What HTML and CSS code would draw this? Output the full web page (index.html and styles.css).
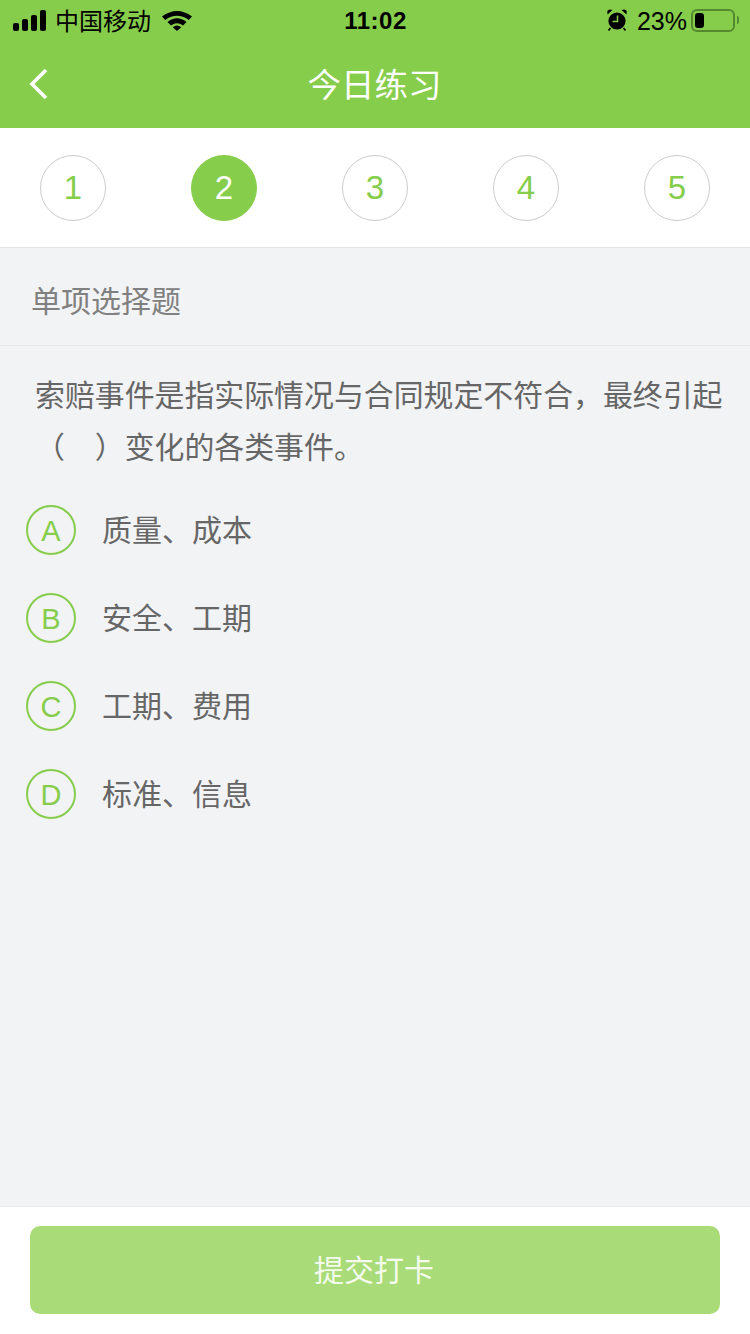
FILE: index.html
```html
<!DOCTYPE html>
<html lang="zh-CN">
<head>
  <meta charset="UTF-8">
  <title>今日练习</title>
  <link rel="stylesheet" href="styles.css">
</head>
<body>

<div class="page">
  <header class="top">
    <div class="status">
      <div class="status-left">
        <span class="signal"><i></i><i></i><i></i><i></i></span>
        <span class="carrier">中国移动</span>
        <svg class="wifi" width="30" height="22" viewBox="0 0 30 22">
          <path d="M0 7.5 Q15 -3.5 30 7.5 L26.8 11 Q15 2.6 3.2 11 Z" fill="#000"/>
          <path d="M5.5 13 Q15 5.5 24.5 13 L21 16.5 Q15 12 9 16.5 Z" fill="#000"/>
          <path d="M10.8 18.2 Q15 15 19.2 18.2 L15 22 Z" fill="#000"/>
        </svg>
      </div>
      <div class="time">11:02</div>
      <div class="status-right">
        <svg class="alarm" width="20" height="22" viewBox="0 0 20 22">
          <circle cx="10" cy="12" r="8.6" fill="#000"/>
          <path d="M0.5 5.5 L5.5 1 Q1.5 -0.5 0.3 2 Z M19.5 5.5 L14.5 1 Q18.5 -0.5 19.7 2 Z" fill="#000"/>
          <path d="M3.5 19 L1.5 21.5 M16.5 19 L18.5 21.5" stroke="#000" stroke-width="1.6"/>
          <path d="M10.5 6.5 V12.5 H5.5" stroke="#86cd4b" stroke-width="1.5" fill="none"/>
        </svg>
        <span class="percent">23%</span>
        <span class="battery"><i></i></span>
        <span class="battery-tip"></span>
      </div>
    </div>
    <div class="nav">
      <svg class="back" width="20" height="32" viewBox="0 0 20 32">
        <path d="M17 2 L3 16 L17 30" fill="none" stroke="#fff" stroke-width="3.6"/>
      </svg>
      <h1>今日练习</h1>
    </div>
  </header>

  <div class="steps">
    <span class="step">1</span>
    <span class="step active">2</span>
    <span class="step">3</span>
    <span class="step">4</span>
    <span class="step">5</span>
  </div>

  <div class="type"><span>单项选择题</span></div>

  <main class="question">
    <p class="stem">索赔事件是指实际情况与合同规定不符合，最终引起（&emsp;）变化的各类事件。</p>
    <ul class="options">
      <li><span class="letter">A</span><span class="label">质量、成本</span></li>
      <li><span class="letter">B</span><span class="label">安全、工期</span></li>
      <li><span class="letter">C</span><span class="label">工期、费用</span></li>
      <li><span class="letter">D</span><span class="label">标准、信息</span></li>
    </ul>
  </main>

  <footer class="bottom">
    <button type="button">提交打卡</button>
  </footer>
</div>

</body>
</html>
```

FILE: styles.css
```css
* {
  box-sizing: border-box;
}
body {
  margin: 0;
  font-family: "Liberation Sans", "Noto Sans CJK SC", sans-serif;
  background-color: #f2f3f5;
}
.page {
  width: 750px;
  height: 1334px;
  display: flex;
  flex-direction: column;
  overflow: hidden;
}

/* topo verde */
.top {
  height: 128px;
  background-color: #86cd4b;
}
.status {
  height: 40px;
  padding: 0 12px 0 13px;
  display: flex;
  align-items: center;
  justify-content: space-between;
  color: #000;
}
.status-left,
.status-right {
  width: 240px;
  display: flex;
  align-items: center;
}
.status-right {
  justify-content: flex-end;
}
.signal {
  display: flex;
  align-items: flex-end;
  gap: 3px;
  height: 21px;
}
.signal i {
  width: 6px;
  background-color: #000;
  border-radius: 2px;
}
.signal i:nth-child(1) { height: 8px; }
.signal i:nth-child(2) { height: 12px; }
.signal i:nth-child(3) { height: 16px; }
.signal i:nth-child(4) { height: 21px; }
.carrier {
  margin-left: 9px;
  margin-top: -2px;
  font-size: 24px;
}
.wifi {
  margin-left: 11px;
}
.time {
  margin-top: 2px;
  font-size: 24px;
  font-weight: bold;
  letter-spacing: 0.5px;
}
.alarm {
  margin-right: 10px;
}
.percent {
  margin-top: 2px;
  font-size: 25px;
}
.battery {
  width: 44px;
  height: 23px;
  margin-left: 4px;
  padding: 2px;
  border: 2px solid #55892f;
  border-radius: 6px;
  display: flex;
}
.battery i {
  width: 9px;
  background-color: #000;
  border-radius: 3px;
}
.battery-tip {
  width: 2px;
  height: 8px;
  margin: 0 -1px 0 2px;
  background-color: #55892f;
  border-radius: 0 2px 2px 0;
}
.nav {
  height: 88px;
  padding-bottom: 3px;
  display: flex;
  align-items: center;
  justify-content: center;
  position: relative;
}
.nav h1 {
  margin: 0 0 0 -1px;
  font-size: 33.5px;
  font-weight: normal;
  color: #fff;
}
.back {
  position: absolute;
  left: 29px;
  top: 28px;
}

/* numeros */
.steps {
  height: 120px;
  padding: 0 40px;
  background-color: #fff;
  border-bottom: 1px solid #e6e6e6;
  display: flex;
  align-items: center;
  justify-content: space-between;
}
.step {
  width: 66px;
  height: 66px;
  border: 1px solid #ccc;
  border-radius: 50%;
  display: flex;
  align-items: center;
  justify-content: center;
  font-size: 33px;
  color: #86cd4b;
}
.step.active {
  background-color: #86cd4b;
  border-color: #86cd4b;
  color: #fff;
}

.type {
  height: 98px;
  padding: 4px 31px 0;
  border-bottom: 1px solid #e9e9e9;
  display: flex;
  align-items: center;
  font-size: 30px;
  color: #808080;
}

.question {
  flex: 1;
}
.stem {
  margin: 24px 26px 0 35px;
  font-size: 29.9px;
  line-height: 52px;
  color: #666;
}
.options {
  list-style: none;
  margin: 12px 0 0;
  padding: 0 0 0 26px;
}
.options li {
  height: 88px;
  display: flex;
  align-items: center;
  font-size: 30px;
  color: #666;
}
.label {
  margin-top: -4px;
}
.letter {
  width: 50px;
  height: 50px;
  margin-right: 26px;
  padding-top: 2px;
  border: 2px solid #86cd4b;
  border-radius: 50%;
  display: flex;
  align-items: center;
  justify-content: center;
  font-size: 29px;
  color: #86cd4b;
}

.bottom {
  height: 128px;
  padding: 19px 30px 0;
  background-color: #fff;
  border-top: 1px solid #e9e9e9;
}
.bottom button {
  width: 100%;
  height: 88px;
  padding: 0 2px 5px 0;
  background-color: #a9dc78;
  color: rgba(255,255,255,0.9);
  font-family: inherit;
  font-size: 30px;
  border: none;
  border-radius: 10px;
}
```
